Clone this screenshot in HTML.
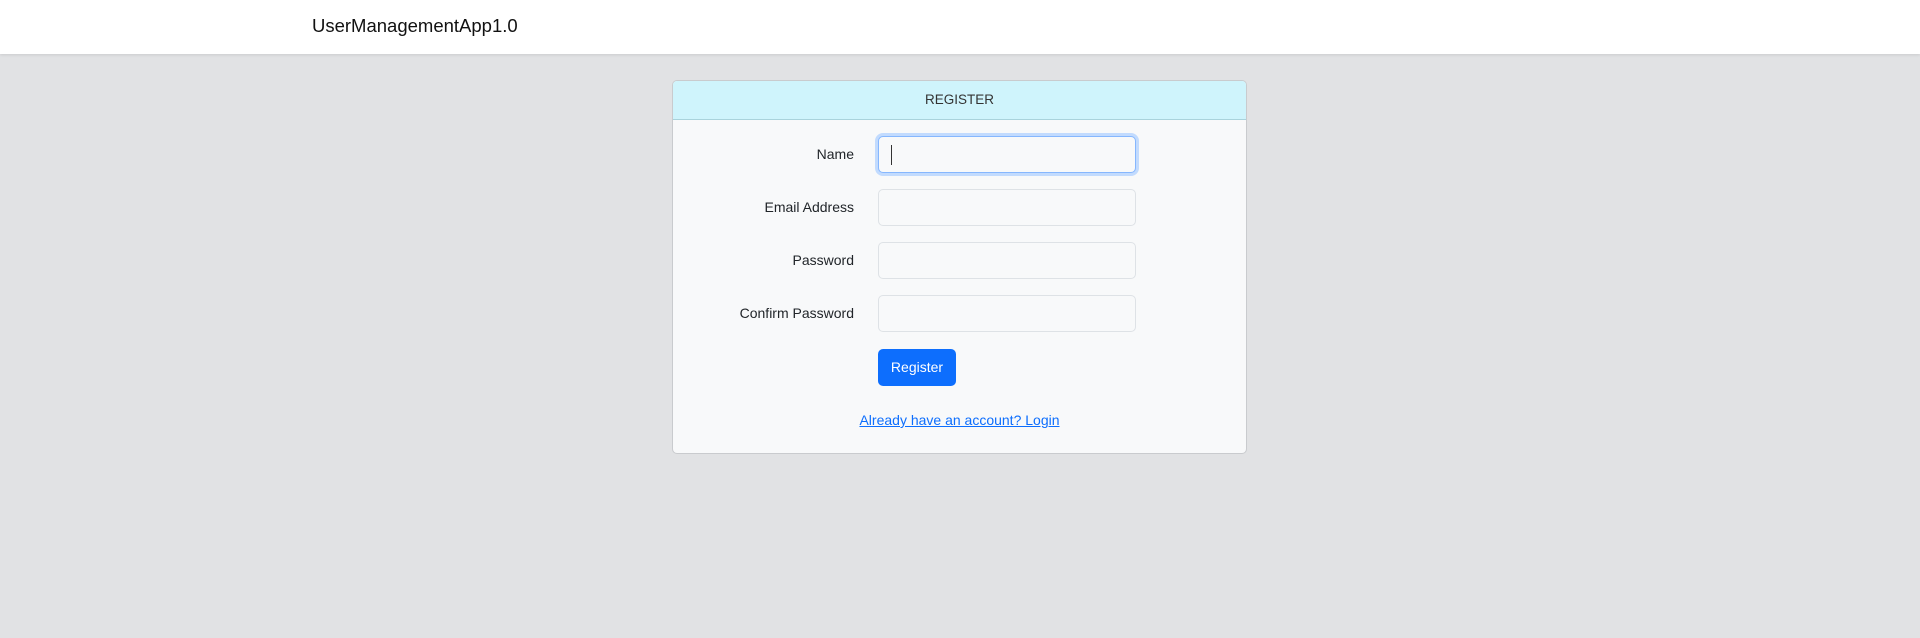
<!DOCTYPE html>
<html><head><style>
body{margin:0;width:1920px;height:638px;background:#e1e2e4;font-family:"Liberation Sans",sans-serif;font-size:14px;color:#212529;position:relative;overflow:hidden}
.nav{position:absolute;left:0;top:0;width:1920px;height:54px;background:#fff;box-shadow:0 1px 3px rgba(0,0,0,.1)}
.brand{position:absolute;left:312px;top:15px;font-size:18.5px;color:#111}
.card{position:absolute;left:672px;top:80px;width:573px;height:372px;background:#f8f9fa;border:1px solid #c9cbce;border-radius:5px;overflow:hidden}
.hdr{height:38px;background:#cff4fc;border-bottom:1px solid #a9d3dc;text-align:center;line-height:38px;font-size:13.5px;color:#333}
.lbl{position:absolute;left:0;width:181px;text-align:right;font-size:14px}
.in{position:absolute;left:205px;width:256px;height:35px;border:1px solid #dee2e6;border-radius:5px;background:#f8f9fa}
.focus{border-color:#86b7fe;box-shadow:0 0 0 3px #c2dbfe}
.btn{position:absolute;left:205px;top:268px;width:78px;height:37px;background:#0d6efd;color:#fff;border-radius:5px;text-align:center;line-height:37px;font-size:14px}
.lnk{position:absolute;left:0;width:573px;text-align:center;top:331px;color:#0d6efd;text-decoration:underline;font-size:14px}
</style></head><body>
<div class="nav"><div class="brand">UserManagementApp1.0</div></div>
<div class="card">
<div class="hdr">REGISTER</div>
<div class="lbl" style="top:65px">Name</div>
<div class="in focus" style="top:55px"><div style="position:absolute;left:12px;top:8px;width:1px;height:20px;background:#333"></div></div>
<div class="lbl" style="top:118px">Email Address</div>
<div class="in" style="top:108px"></div>
<div class="lbl" style="top:171px">Password</div>
<div class="in" style="top:161px"></div>
<div class="lbl" style="top:224px">Confirm Password</div>
<div class="in" style="top:214px"></div>
<div class="btn">Register</div>
<div class="lnk">Already have an account? Login</div>
</div>
</body></html>
